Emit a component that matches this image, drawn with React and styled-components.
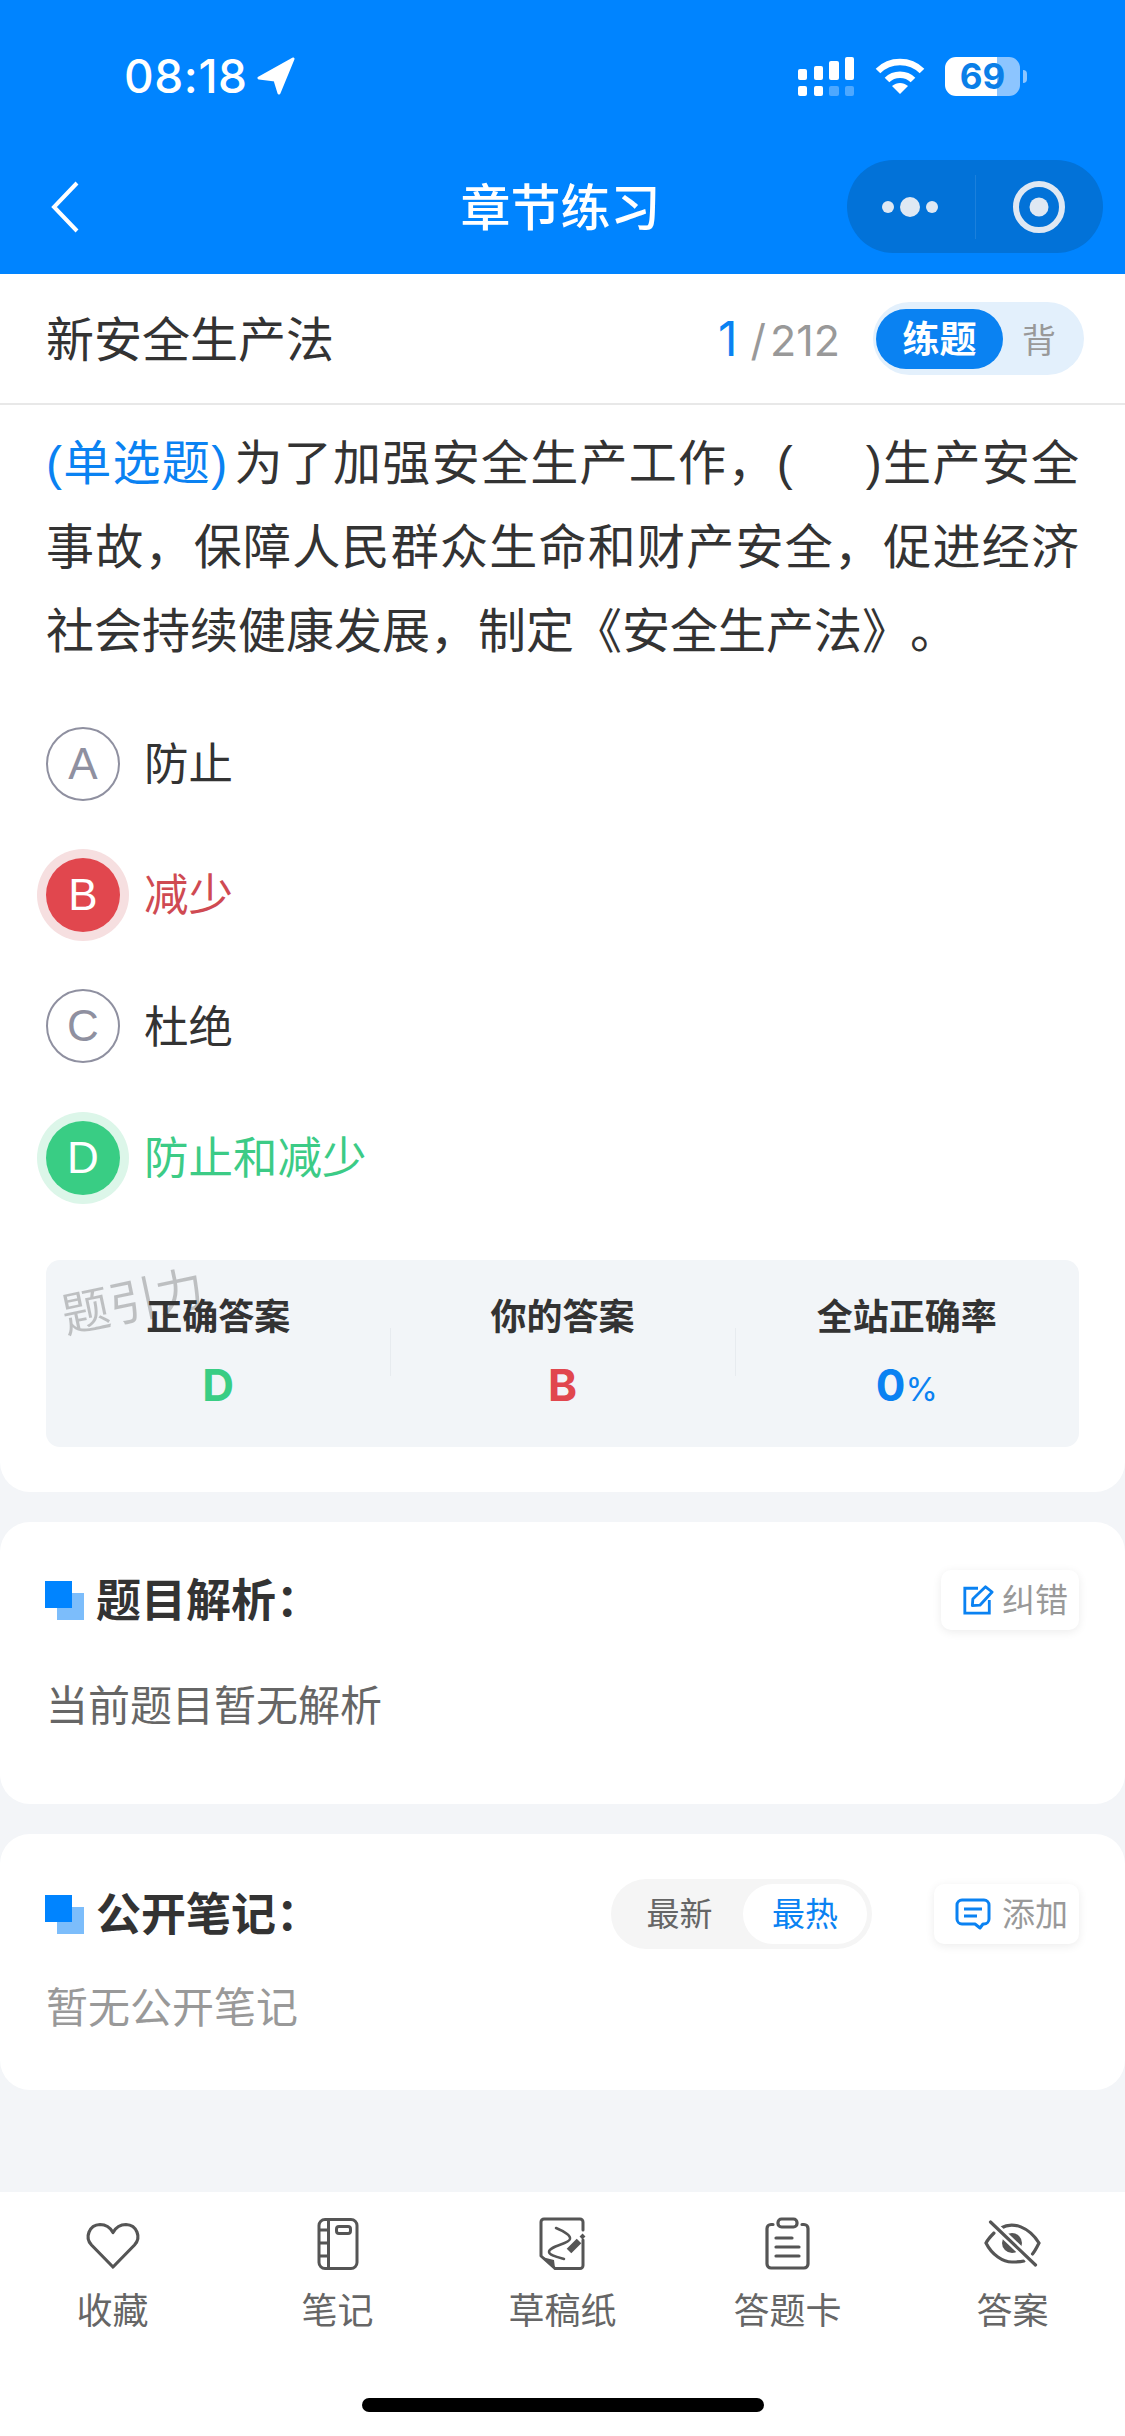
import React from 'react';
import styled, { createGlobalStyle } from 'styled-components';

const GlobalStyle = createGlobalStyle`
    html, body {
        margin: 0;
        padding: 0;
        background: #f3f5f8;
    }
    * {
        box-sizing: border-box;
    }
`;

const BLUE = '#0a82f2';
const RED = '#e1474e';
const GREEN = '#39cd84';

const options = [
    { key: 'A', text: '防止' },
    { key: 'B', text: '减少', state: 'wrong' },
    { key: 'C', text: '杜绝' },
    { key: 'D', text: '防止和减少', state: 'right' },
];

const stats = [
    { label: '正确答案', value: 'D', color: GREEN },
    { label: '你的答案', value: 'B', color: RED },
    { label: '全站正确率', value: '0', unit: '%', color: BLUE },
];

const HeartIcon = () => (
    <svg width="60" height="56" viewBox="0 0 60 56" fill="none" stroke="#555" strokeWidth="3.2" strokeLinejoin="round">
        <path d="M30 51 L8.5 29 C1.5 21.5 6 9 17 8.5 C23 8.5 27.5 12 30 16.5 C32.5 12 37 8.5 43 8.5 C54 9 58.5 21.5 51.5 29 Z" />
    </svg>
);

const NotebookIcon = () => (
    <svg width="60" height="56" viewBox="0 0 60 56" fill="none" stroke="#555" strokeWidth="3">
        <rect x="11" y="3.5" width="38" height="49" rx="6" />
        <path d="M20.5 3.5 V52.5 M11 14 H20.5 M11 27 H20.5 M11 40 H20.5" />
        <rect x="28.5" y="10.5" width="14" height="7" rx="2.5" />
    </svg>
);

const DraftIcon = () => (
    <svg width="60" height="56" viewBox="0 0 60 56" fill="none" stroke="#555" strokeWidth="3" strokeLinejoin="round" strokeLinecap="round">
        <path d="M22 52.5 L8 40 V6 a3 3 0 0 1 3 -3 H47 a3 3 0 0 1 3 3 V14 M50 24 V49.5 a3 3 0 0 1 -3 3 H22" />
        <path d="M9 41 L21 44 L22 52 Z" fill="#555" stroke="none" />
        <path d="M23 12 C30 15 38 19 37 23 C36 28 16 30 16 36 C16 39 24 41 31 43" strokeWidth="2.5" />
        <path d="M36 35 L46 25" strokeWidth="6.5" strokeLinecap="butt" />
        <path d="M48 22 L51 19" strokeWidth="4" strokeLinecap="butt" />
    </svg>
);

const ClipboardIcon = () => (
    <svg width="60" height="56" viewBox="0 0 60 56" fill="none" stroke="#555" strokeWidth="3.2" strokeLinecap="round">
        <path d="M15 8.5 H13 a4 4 0 0 0 -4 4 V48 a4 4 0 0 0 4 4 H46 a4 4 0 0 0 4 -4 V12.5 a4 4 0 0 0 -4 -4 H44" />
        <rect x="20" y="3" width="19" height="8" rx="3.5" />
        <path d="M18 22 H34 M18 31 H41 M18 40 H41" />
    </svg>
);

const EyeOffIcon = () => (
    <svg width="60" height="56" viewBox="0 0 60 56" fill="none" stroke="#555" strokeWidth="3.2" strokeLinecap="round">
        <path d="M18 12 C30 5 46 11 56 27 C54 31 52 35 49.5 38" />
        <path d="M11 17 C8 20 5 23 3 27 C9 39 20 46 29 46 C33 46 37 46 41 45" />
        <circle cx="29" cy="27" r="10" fill="#555" stroke="none" />
        <path d="M7.5 6 L52.5 49" stroke="#fff" strokeWidth="8" />
        <path d="M7.5 6 L52.5 49" />
    </svg>
);

const tools = [
    { label: '收藏', icon: <HeartIcon /> },
    { label: '笔记', icon: <NotebookIcon /> },
    { label: '草稿纸', icon: <DraftIcon /> },
    { label: '答题卡', icon: <ClipboardIcon /> },
    { label: '答案', icon: <EyeOffIcon /> },
];

const App = () => {
    return (
        <Page>
            <GlobalStyle />
            <Header>
                <StatusBar>
                    <Clock>
                        <Time>08:18</Time>
                        <svg width="38" height="38" viewBox="0 0 38 38" fill="#fff">
                            <path d="M36 2 L2 21 L18 23 L22 36 Z" strokeLinejoin="round" stroke="#fff" strokeWidth="3" />
                        </svg>
                    </Clock>
                    <StatusIcons>
                        <svg width="58" height="40" viewBox="0 0 58 40">
                            <rect x="1" y="13" width="9" height="11" rx="2" fill="#fff" />
                            <rect x="17" y="10" width="9" height="14" rx="2" fill="#fff" />
                            <rect x="32" y="5" width="10" height="19" rx="2" fill="#fff" />
                            <rect x="48" y="1" width="9" height="23" rx="2" fill="#fff" />
                            <rect x="1" y="30" width="9" height="10" rx="2" fill="#fff" />
                            <rect x="17" y="30" width="9" height="10" rx="2" fill="#fff" />
                            <rect x="32" y="30" width="10" height="10" rx="2" fill="#4da8ff" />
                            <rect x="48" y="30" width="9" height="10" rx="2" fill="#4da8ff" />
                        </svg>
                        <svg width="50" height="38" viewBox="0 0 50 38" fill="none" stroke="#fff" strokeWidth="6.5">
                            <path d="M3 14 C15 2 35 2 47 14" />
                            <path d="M12 23 C19 16 31 16 38 23" />
                            <path d="M25 37 L17 29 C22 25 28 25 33 29 Z" fill="#fff" stroke="none" />
                        </svg>
                        <BatteryWrap>
                            <Battery>69</Battery>
                            <BatteryTip />
                        </BatteryWrap>
                    </StatusIcons>
                </StatusBar>
                <NavBar>
                    <BackButton>
                        <svg width="28" height="52" viewBox="0 0 28 52" fill="none" stroke="#fff" strokeWidth="4">
                            <path d="M26 2 L3 26 L26 50" />
                        </svg>
                    </BackButton>
                    <NavTitle>章节练习</NavTitle>
                    <Capsule>
                        <CapsulePart>
                            <svg width="64" height="24" viewBox="0 0 64 24" fill="#dfe8f3">
                                <circle cx="9" cy="12" r="6" />
                                <circle cx="31" cy="12" r="10" />
                                <circle cx="53" cy="12" r="6" />
                            </svg>
                        </CapsulePart>
                        <CapsuleDivider />
                        <CapsulePart>
                            <svg width="54" height="54" viewBox="0 0 54 54" fill="none" stroke="#dfe8f3" strokeWidth="6">
                                <circle cx="27" cy="27" r="23" />
                                <circle cx="27" cy="27" r="9.5" fill="#dfe8f3" stroke="none" />
                            </svg>
                        </CapsulePart>
                    </Capsule>
                </NavBar>
            </Header>

            <SubHeader>
                <SubTitle>新安全生产法</SubTitle>
                <Counter>
                    <CounterCurrent>1</CounterCurrent>
                    <CounterSlash>/</CounterSlash>212
                </Counter>
                <ModeSwitch>
                    <ModeActive>练题</ModeActive>
                    <ModeIdle>背</ModeIdle>
                </ModeSwitch>
            </SubHeader>

            <Card $paddingBottom={45}>
                <Question>
                    <QuestionLine $fill>
                        <QuestionType>(单选题)</QuestionType>为了加强安全生产工作，(&nbsp;&nbsp;&nbsp;&nbsp;&nbsp;)生产安全
                    </QuestionLine>
                    <QuestionLine $fill>事故，保障人民群众生命和财产安全，促进经济</QuestionLine>
                    <QuestionLine>社会持续健康发展，制定《安全生产法》。</QuestionLine>
                </Question>
                <Options>
                    {options.map((o) => (
                        <Option key={o.key}>
                            <OptionMark $state={o.state}>{o.key}</OptionMark>
                            <OptionText $state={o.state}>{o.text}</OptionText>
                        </Option>
                    ))}
                </Options>
                <StatsBox>
                    <Watermark>题引力</Watermark>
                    {stats.map((s, i) => (
                        <Stat key={s.label} $divider={i > 0}>
                            <StatLabel>{s.label}</StatLabel>
                            <StatValue $color={s.color}>
                                {s.value}
                                {s.unit && <StatUnit>{s.unit}</StatUnit>}
                            </StatValue>
                        </Stat>
                    ))}
                </StatsBox>
            </Card>

            <Card $gap $paddingBottom={71}>
                <SectionHead $top={48}>
                    <SectionMark />
                    <SectionTitle>题目解析：</SectionTitle>
                    <SmallButton $gap={8}>
                        <svg width="32" height="32" viewBox="0 0 34 34" fill="none" stroke={BLUE} strokeWidth="3">
                            <path d="M17 4.5 H3 V31 H29 V17" />
                            <path d="M11 23 L11.5 16 L25 3 L32 8.5 L19 22.5 Z" strokeLinejoin="round" />
                        </svg>
                        <SmallButtonText>纠错</SmallButtonText>
                    </SmallButton>
                </SectionHead>
                <SectionBody $top={43} $color="#666">当前题目暂无解析</SectionBody>
            </Card>

            <Card $gap $paddingBottom={55}>
                <SectionHead $top={50}>
                    <SectionMark />
                    <SectionTitle>公开笔记：</SectionTitle>
                    <SortSwitch>
                        <SortItem>最新</SortItem>
                        <SortItem $active>最热</SortItem>
                    </SortSwitch>
                    <SmallButton $gap={11}>
                        <svg width="36" height="32" viewBox="0 0 36 32" fill="none" stroke={BLUE} strokeWidth="3">
                            <path d="M7 2 H29 a5 5 0 0 1 5 5 V21 a5 5 0 0 1 -5 5 H28 L25 30 L20 26 H7 a5 5 0 0 1 -5 -5 V7 a5 5 0 0 1 5 -5 Z" strokeLinejoin="round" />
                            <path d="M9 11 H27 M9 18 H22" />
                        </svg>
                        <SmallButtonText>添加</SmallButtonText>
                    </SmallButton>
                </SectionHead>
                <SectionBody $top={31} $color="#999">暂无公开笔记</SectionBody>
            </Card>

            <Toolbar>
                <ToolRow>
                    {tools.map((t) => (
                        <Tool key={t.label}>
                            {t.icon}
                            <ToolLabel>{t.label}</ToolLabel>
                        </Tool>
                    ))}
                </ToolRow>
                <HomeIndicator />
            </Toolbar>
        </Page>
    );
};

const Page = styled.div`
    width: 1125px;
    height: 2436px;
    overflow: hidden;
    display: flex;
    flex-direction: column;
    background: #f3f5f8;
    color: #333;
    font-family: "Noto Sans CJK SC", "Inter", sans-serif;
    text-spacing-trim: space-all;
`;

const Header = styled.header`
    height: 274px;
    background: #0084ff;
    color: #fff;
`;

const StatusBar = styled.div`
    height: 152px;
    padding: 0 98px 0 124px;
    display: flex;
    align-items: center;
    justify-content: space-between;
`;

const Clock = styled.div`
    display: flex;
    align-items: center;
    gap: 9px;
`;

const Time = styled.span`
    font-family: "Inter", sans-serif;
    font-size: 46px;
    font-weight: 500;
    letter-spacing: 0.6px;
`;

const StatusIcons = styled.div`
    display: flex;
    align-items: center;
    gap: 20px;
`;

const BatteryWrap = styled.div`
    display: flex;
    align-items: center;
    gap: 3px;
`;

const Battery = styled.div`
    width: 75px;
    height: 39px;
    border-radius: 11px;
    background: linear-gradient(90deg, #fff 0, #fff 69%, #8cc5ff 69%, #8cc5ff 100%);
    color: #0a7fe8;
    font-family: "Inter", sans-serif;
    font-size: 35px;
    font-weight: 700;
    line-height: 39px;
    text-align: center;
`;

const BatteryTip = styled.div`
    width: 4px;
    height: 13px;
    border-radius: 0 4px 4px 0;
    background: #8cc5ff;
`;

const NavBar = styled.div`
    height: 93px;
    margin-top: 8px;
    padding: 0 22px 0 18px;
    display: grid;
    grid-template-columns: 1fr auto 1fr;
    align-items: center;
`;

const BackButton = styled.div`
    margin-left: 33px;
    display: flex;
`;

const NavTitle = styled.div`
    font-size: 50px;
    font-weight: 500;
    padding-bottom: 6px;
`;

const Capsule = styled.div`
    justify-self: end;
    width: 256px;
    height: 93px;
    border-radius: 47px;
    background: #0272d8;
    display: flex;
    align-items: center;
`;

const CapsulePart = styled.div`
    flex: 1;
    display: flex;
    align-items: center;
    justify-content: center;
`;

const CapsuleDivider = styled.div`
    width: 1px;
    height: 64px;
    background: rgba(255, 255, 255, 0.1);
`;

const SubHeader = styled.div`
    height: 131px;
    padding: 0 41px 0 46px;
    background: #fff;
    border-bottom: 2px solid #e8e8e8;
    display: flex;
    align-items: center;
`;

const SubTitle = styled.div`
    flex: 1;
    font-size: 48px;
    color: #333;
    padding-bottom: 6px;
`;

const Counter = styled.div`
    font-family: "Inter", sans-serif;
    font-size: 43px;
    color: #999;
    margin-right: 33px;
    display: flex;
    align-items: baseline;
`;

const CounterCurrent = styled.span`
    font-size: 48px;
    font-weight: 400;
    color: ${BLUE};
`;

const CounterSlash = styled.span`
    margin: 0 4px 0 13px;
`;

const ModeSwitch = styled.div`
    width: 211px;
    height: 73px;
    padding: 0 28px 0 3px;
    border-radius: 37px;
    background: #e3f0fc;
    display: flex;
    align-items: center;
    justify-content: space-between;
`;

const ModeActive = styled.div`
    width: 127px;
    height: 60px;
    border-radius: 30px;
    background: ${BLUE};
    color: #fff;
    font-size: 37px;
    font-weight: 700;
    line-height: 57px;
    text-align: center;
`;

const ModeIdle = styled.div`
    font-size: 34px;
    color: #999;
`;

const Card = styled.section`
    background: #fff;
    padding: 0 46px ${(p) => p.$paddingBottom}px;
    border-radius: ${(p) => (p.$gap ? '30px' : '0 0 30px 30px')};
    margin-top: ${(p) => (p.$gap ? '30px' : '0')};
`;

const Question = styled.div`
    padding-top: 17px;
    font-family: "Liberation Sans", "Noto Sans CJK SC", sans-serif;
    font-size: 48px;
    line-height: 84px;
    color: #333;
`;

const QuestionLine = styled.div`
    white-space: nowrap;
    text-align: justify;
    text-align-last: ${(p) => (p.$fill ? 'justify' : 'left')};
    text-justify: inter-character;
`;

const QuestionType = styled.span`
    color: ${BLUE};
    margin-right: 6px;
`;

const Options = styled.div`
    margin-top: 24px;
`;

const Option = styled.div`
    height: 131.3px;
    display: flex;
    align-items: center;
    gap: 24px;
`;

const markStyles = {
    wrong: `background: ${RED}; color: #fff; box-shadow: 0 0 0 9px #f6dfe0;`,
    right: `background: ${GREEN}; color: #fff; box-shadow: 0 0 0 9px #dcf6e9;`,
};

const OptionMark = styled.div`
    width: 74px;
    height: 74px;
    border-radius: 50%;
    border: ${(p) => (p.$state ? 'none' : '2.5px solid #8f90a0')};
    color: #8f90a0;
    font-family: "Liberation Sans", sans-serif;
    font-size: 44px;
    display: flex;
    align-items: center;
    justify-content: center;
    ${(p) => markStyles[p.$state] || ''}
`;

const OptionText = styled.div`
    font-size: 44.5px;
    padding-bottom: 6px;
    color: ${(p) => (p.$state === 'wrong' ? '#cf4a52' : p.$state === 'right' ? '#3ccb86' : '#333')};
`;

const StatsBox = styled.div`
    position: relative;
    margin-top: 37px;
    height: 187px;
    border-radius: 14px;
    background: #f2f5f8;
    display: grid;
    grid-template-columns: repeat(3, 1fr);
`;

const Watermark = styled.div`
    position: absolute;
    left: 14px;
    top: 8px;
    font-size: 48px;
    line-height: 60px;
    color: rgba(0, 0, 0, 0.22);
    font-weight: 400;
    transform: rotate(-12deg);
`;

const Stat = styled.div`
    position: relative;
    padding-top: 29px;
    text-align: center;

    &::before {
        content: '';
        display: ${(p) => (p.$divider ? 'block' : 'none')};
        position: absolute;
        left: 0;
        top: 68px;
        height: 48px;
        width: 1px;
        background: #e7ebef;
    }
`;

const StatLabel = styled.div`
    font-size: 36px;
    line-height: 50px;
    font-weight: 700;
    color: #333;
`;

const StatValue = styled.div`
    margin-top: 24px;
    font-family: "Inter", sans-serif;
    font-size: 44px;
    line-height: 44px;
    font-weight: 700;
    color: ${(p) => p.$color};
`;

const StatUnit = styled.span`
    font-size: 33px;
    font-weight: 400;
`;

const SectionHead = styled.div`
    height: 60px;
    margin-top: ${(p) => p.$top}px;
    display: flex;
    align-items: center;
`;

const SectionMark = styled.span`
    width: 39px;
    height: 39px;
    margin: 0 12px 0 -1px;
    background: linear-gradient(#0084ff, #0084ff) 0 0 / 27px 27px no-repeat,
        linear-gradient(#7cbdfb, #7cbdfb) 12px 12px / 27px 27px no-repeat;
`;

const SectionTitle = styled.h3`
    flex: 1;
    margin: 0;
    padding-bottom: 6px;
    font-size: 45px;
    font-weight: 700;
    color: #333;
`;

const SmallButton = styled.div`
    height: 60px;
    padding: 0 11px 0 21px;
    border-radius: 10px;
    background: #fff;
    box-shadow: 0 2px 10px rgba(0, 0, 0, 0.08);
    display: flex;
    align-items: center;
    gap: ${(p) => p.$gap}px;
`;

const SmallButtonText = styled.span`
    font-size: 33px;
    padding-bottom: 4px;
    color: #999;
`;

const SortSwitch = styled.div`
    width: 261px;
    height: 70px;
    margin-right: 62px;
    padding: 0 5px;
    border-radius: 35px;
    background: #f5f5f5;
    display: grid;
    grid-template-columns: 127px 124px;
    align-items: center;
`;

const SortItem = styled.div`
    height: 60px;
    border-radius: 30px;
    font-size: 33px;
    line-height: 56px;
    text-align: center;
    color: ${(p) => (p.$active ? BLUE : '#666')};
    background: ${(p) => (p.$active ? '#fff' : 'transparent')};
`;

const SectionBody = styled.div`
    margin-top: ${(p) => p.$top}px;
    font-size: 42px;
    line-height: 60px;
    color: ${(p) => p.$color};
`;

const Toolbar = styled.footer`
    margin-top: auto;
    height: 244px;
    background: #fff;
    display: flex;
    flex-direction: column;
    align-items: center;
`;

const ToolRow = styled.div`
    width: 100%;
    padding-top: 24px;
    display: grid;
    grid-template-columns: repeat(5, 1fr);
`;

const Tool = styled.div`
    display: flex;
    flex-direction: column;
    align-items: center;
`;

const ToolLabel = styled.div`
    margin-top: 10px;
    font-size: 36px;
    line-height: 52px;
    color: #666;
`;

const HomeIndicator = styled.div`
    margin-top: 64px;
    width: 402px;
    height: 14px;
    border-radius: 7px;
    background: #000;
`;

export default App;
